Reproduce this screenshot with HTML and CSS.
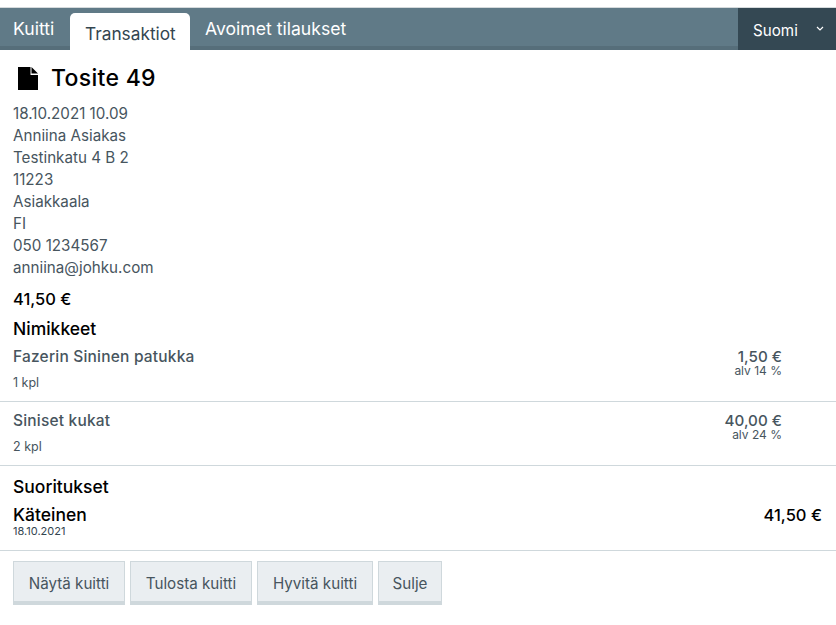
FILE: index.html
```html
<!DOCTYPE html>
<html lang="fi">
<head>
<meta charset="utf-8">
<title>Tosite 49</title>
<link rel="stylesheet" href="styles.css">
</head>
<body>
<nav class="nav">
  <div class="tabs">
    <a class="tab t1">Kuitti</a>
    <a class="tab active">Transaktiot</a>
    <a class="tab">Avoimet tilaukset</a>
  </div>
  <div class="lang"><span>Suomi</span>
    <svg class="chev" width="8" height="5" viewBox="0 0 8 5"><path d="M1 1l3 3 3-3" fill="none" stroke="#fff" stroke-width="1.2"/></svg>
  </div>
</nav>
<main>
  <section class="head">
    <h1 class="title">
      <svg class="doc" width="20" height="23" viewBox="0 0 20 23"><path d="M0 0H12.5V8H20V23H0z M13.5 0L20 6.5H13.5z" fill="#000"/></svg>
      Tosite 49
    </h1>
    <div class="info">
      <div>18.10.2021 10.09</div>
      <div>Anniina Asiakas</div>
      <div>Testinkatu 4 B 2</div>
      <div>11223</div>
      <div>Asiakkaala</div>
      <div>FI</div>
      <div>050 1234567</div>
      <div>anniina@johku.com</div>
    </div>
    <div class="total">41,50 €</div>
    <h2 class="sub">Nimikkeet</h2>
  </section>
  <div class="item first">
    <div>
      <div class="name">Fazerin Sininen patukka</div>
      <div class="qty">1 kpl</div>
    </div>
    <div class="price"><div class="amt">1,50 €</div><div class="vat">alv 14 %</div></div>
  </div>
  <div class="item second">
    <div>
      <div class="name">Siniset kukat</div>
      <div class="qty">2 kpl</div>
    </div>
    <div class="price"><div class="amt">40,00 €</div><div class="vat">alv 24 %</div></div>
  </div>
  <section class="pay">
    <h2 class="sub">Suoritukset</h2>
    <div class="payrow">
      <div>
        <div class="method">Käteinen</div>
        <div class="date">18.10.2021</div>
      </div>
      <div class="paid">41,50 €</div>
    </div>
  </section>
  <div class="actions">
    <button class="btn b1">Näytä kuitti</button>
    <button class="btn b2">Tulosta kuitti</button>
    <button class="btn b3">Hyvitä kuitti</button>
    <button class="btn b4">Sulje</button>
  </div>
</main>
</body>
</html>
```
FILE: styles.css
```css
* { box-sizing: border-box; }
html, body { margin: 0; padding: 0; background: #fff; }
body { font-family: Inter, "Noto Sans", sans-serif; color: #47555e; font-size: 15.2px; padding-top: 7px; }
.nav {
  display: flex; justify-content: space-between; height: 43px;
  background: #607a87; border-top: 1px solid #d5dadc; border-bottom: 4px solid #566e7a;
}
.tabs { display: flex; }
.tab { color: #fff; font-size: 17.6px; padding: 9px 13px 0; line-height: 24px; }
.t1 { width: 68px; white-space: nowrap; }
.tab.active {
  background: #fff; color: #33454f; margin: 5px 2px -4px; padding: 9px 0 0 15px; font-size: 17.3px;
  border-radius: 5px 5px 0 0; height: 37px; width: 120px;
}
.lang {
  width: 98px; background: #344853; margin-bottom: -4px; color: #fff; font-size: 15.2px;
  display: flex; align-items: center; padding: 2px 0 0 15px; gap: 18px;
}
.chev { margin-top: -3px; }
.head { padding: 0 13px; }
.title {
  margin: 0; font-size: 23px; font-weight: 500; color: #000; display: flex; align-items: center; gap: 13px;
  height: 44px; padding: 12px 0 0 5px; letter-spacing: .3px;
}
.info { line-height: 22px; padding-top: 9px; }
.total { font-size: 16.5px; font-weight: 500; color: #000; line-height: 22px; margin-top: 9px; }
.sub { margin: 8px 0 0; font-size: 17.5px; font-weight: 500; color: #000; line-height: 22px; }
.item { display: flex; justify-content: space-between; padding: 0 54px 0 13px; border-bottom: 1px solid #cfd8dc; height: 64px; }
.item.first { height: 62px; padding-top: 6px; }
.name { font-size: 15.5px; font-weight: 500; line-height: 22px; letter-spacing: .2px; }
.item.second .name { margin-top: 8px; }
.qty { font-size: 12.5px; line-height: 16px; margin-top: 7px; }
.price { text-align: right; }
.item.second .price { margin-top: 8px; }
.amt { font-size: 15.2px; font-weight: 500; line-height: 18px; padding-top: 2px; }
.vat { font-size: 12px; line-height: 10px; }
.pay { padding: 0 14px 0 13px; border-bottom: 1px solid #cfd8dc; height: 75px; }
.pay .sub { margin-top: 10px; }
.payrow { display: flex; justify-content: space-between; margin-top: 6px; }
.method { font-size: 17.5px; font-weight: 500; color: #000; line-height: 22px; }
.paid { font-size: 16.5px; font-weight: 500; color: #000; line-height: 22px; }
.date { font-size: 11px; line-height: 10px; color: #33454f; }
.actions { display: flex; gap: 5px; padding: 10px 13px 0; }
.btn {
  font: inherit; color: #47555e; background: #eaeef1;
  border: 1px solid #cfd8dc; border-bottom-width: 4px; height: 44px; padding: 3px 0 0; border-radius: 0;
}
.b1 { width: 112px; }
.b2 { width: 122px; }
.b3 { width: 116px; }
.b4 { width: 64px; }
```
